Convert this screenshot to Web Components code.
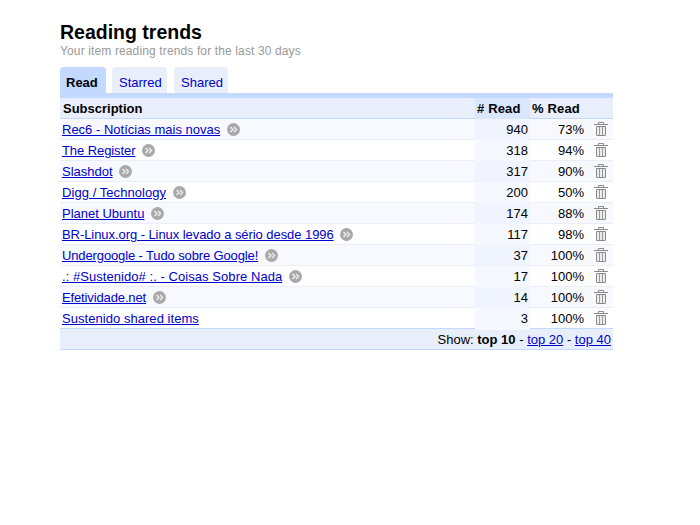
<!DOCTYPE html>
<html><head><meta charset="utf-8"><style>
html,body{margin:0;background:#fff}
body{font:13px/16px "Liberation Sans",Arial,sans-serif;color:#000}
</style></head><body>
<trends-page>
<h-title slot="head"></h-title>
<trend-row name="Rec6 - Notícias mais novas" n="940" p="73%" odd></trend-row>
<trend-row name="The Register" n="318" p="94%" ls="-.08"></trend-row>
<trend-row name="Slashdot" n="317" p="90%" odd></trend-row>
<trend-row name="Digg / Technology" n="200" p="50%" ls=".06"></trend-row>
<trend-row name="Planet Ubuntu" n="174" p="88%" odd></trend-row>
<trend-row name="BR-Linux.org - Linux levado a sério desde 1996" n="117" p="98%" ls="-.065"></trend-row>
<trend-row name="Undergoogle - Tudo sobre Google!" n="37" p="100%" odd ls="-.125"></trend-row>
<trend-row name=".: #Sustenido# :. - Coisas Sobre Nada" n="17" p="100%" ls=".055"></trend-row>
<trend-row name="Efetividade.net" n="14" p="100%" odd ls="-.13"></trend-row>
<trend-row name="Sustenido shared items" n="3" p="100%" plain ls=".045"></trend-row>
</trends-page>
<script>
class HTitle extends HTMLElement{constructor(){super();this.attachShadow({mode:'open'}).innerHTML=`<style>
:host{display:block;padding:0}
h1{margin:0;font:bold 19.5px/24px "Liberation Sans",Arial,sans-serif;color:#000}
p{margin:0;font:12px/14px "Liberation Sans",Arial,sans-serif;color:#999;letter-spacing:.13px}
</style><h1>Reading trends</h1><p>Your item reading trends for the last 30 days</p>`}}
customElements.define('h-title',HTitle);
class TrendRow extends HTMLElement{constructor(){super();
const odd=this.hasAttribute('odd');
const s=this.attachShadow({mode:'open'});
s.innerHTML=`<style>
:host{display:grid;grid-template-columns:415px 55px 1fr;height:21px;box-sizing:border-box;border-bottom:1px solid #e8eefa;font:13px/22px "Liberation Sans",Arial,sans-serif;background:${odd?'#f7f9ff':'#fff'}}
.name{padding-left:2px;white-space:nowrap;display:flex;align-items:flex-start;gap:6.5px}
a{color:#00c;text-decoration:underline;letter-spacing:${this.getAttribute('ls')||0}px}
.n{background:${odd?'#f0f4fe':'#f6f8ff'};text-align:right;padding-right:2px}
.p{display:flex;justify-content:flex-end;padding-right:5px;gap:10px}
svg{display:block}.a{margin-top:4px}.t{margin-top:3px}
</style><div class="name"><a href="#">${this.getAttribute('name')}</a>${this.hasAttribute('plain')?'':`<svg class="a" width="13" height="13" viewBox="0 0 13 13"><circle cx="6.5" cy="6.5" r="6.5" fill="#a9a9a9"/><path d="M3.5 4l2.5 2.5-2.5 2.5M7 4l2.5 2.5L7 9" fill="none" stroke="#eee" stroke-width="1.4"/></svg>`}</div>
<div class="n">${this.getAttribute('n')}</div>
<div class="p"><span>${this.getAttribute('p')}</span><svg class="t" width="14" height="14" viewBox="0 0 14 14"><path d="M4.5 2V.5h5V2" fill="none" stroke="#8a8a8a"/><path d="M0 2.5h14" stroke="#8a8a8a"/><path d="M2.5 4.5h9v8.5a.5.5 0 0 1-.5.5H3a.5.5 0 0 1-.5-.5z" fill="#ececec" stroke="#8a8a8a"/><path d="M5.5 5v8M8.5 5v8" stroke="#999"/></svg></div>`}}
customElements.define('trend-row',TrendRow);
class TrendsPage extends HTMLElement{constructor(){super();this.attachShadow({mode:'open'}).innerHTML=`<style>
:host{display:block;width:553px;padding:20px 0 0 60px;font:13px/16px "Liberation Sans",Arial,sans-serif}
.tabs{display:flex;margin-top:9px;height:26px;align-items:flex-end}
.tab{height:26px;box-sizing:border-box;border-radius:4px 4px 0 0;background:#e8eefa;line-height:31px;color:#00c;padding-left:7px}
.tab.on{background:#c3d9ff;color:#000;font-weight:bold;width:46px;padding-left:6px}
.s1{width:55px;margin-left:6px}.s2{width:54px;margin-left:7px}
.band{height:5px;background:#c3d9ff}
.hd{display:grid;grid-template-columns:415px 55px 1fr;height:21px;box-sizing:border-box;background:#e8eefa;border-bottom:1px solid #c3d9ff;font-weight:bold;line-height:22px}
.hd div:first-child{padding-left:3px}.hd .n{background:#d9e6fd;padding-left:2px;letter-spacing:.15px}.hd .p{padding-left:2px;letter-spacing:.15px}
.ft{height:22px;box-sizing:border-box;background:#e8eefa;border-top:1px solid #c3d9ff;border-bottom:1px solid #c3d9ff;margin-top:-1px;text-align:right;padding-right:2px;line-height:21px}
.ft a{color:#00c}
</style><slot name="head"></slot>
<div class="tabs"><div class="tab on">Read</div><div class="tab s1">Starred</div><div class="tab s2">Shared</div></div>
<div class="band"></div>
<div class="hd"><div>Subscription</div><div class="n"># Read</div><div class="p">% Read</div></div>
<slot></slot>
<div class="ft">Show: <b>top 10</b> - <a href="#">top 20</a> - <a href="#">top 40</a></div>`}}
customElements.define('trends-page',TrendsPage);
</script></body></html>
